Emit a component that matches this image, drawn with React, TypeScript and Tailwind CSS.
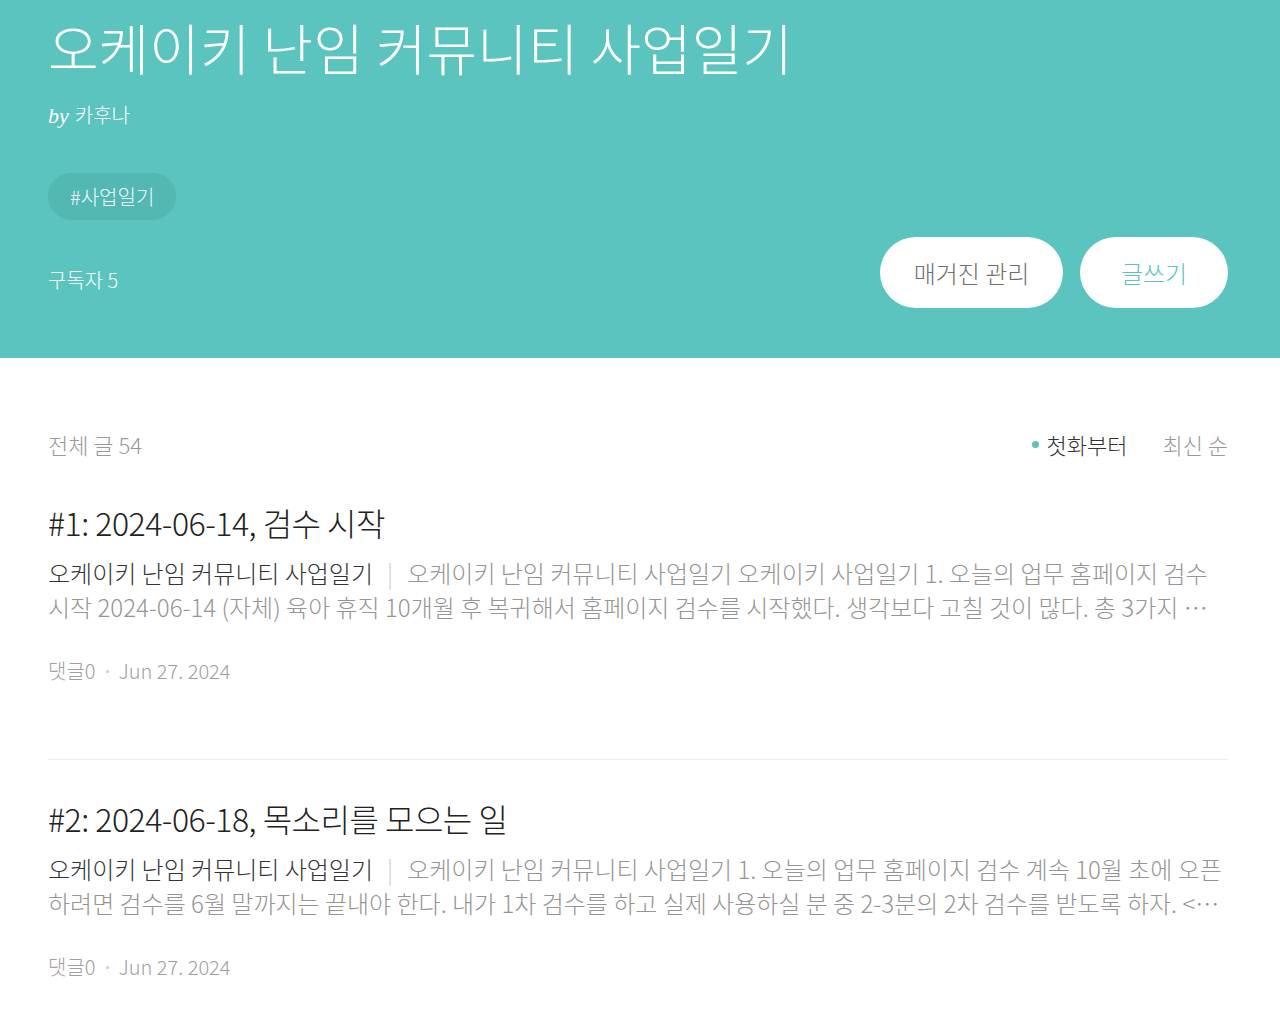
const posts = [
  {
    title: "#1: 2024-06-14, 검수 시작",
    body: "오케이키 난임 커뮤니티 사업일기 오케이키 사업일기 1. 오늘의 업무 홈페이지 검수 시작 2024-06-14 (자체) 육아 휴직 10개월 후 복귀해서 홈페이지 검수를 시작했다. 생각보다 고칠 것이 많다. 총 3가지 종류의 검수를 진행하기로 했다.",
  },
  {
    title: "#2: 2024-06-18, 목소리를 모으는 일",
    body: "오케이키 난임 커뮤니티 사업일기 1. 오늘의 업무 홈페이지 검수 계속 10월 초에 오픈 하려면 검수를 6월 말까지는 끝내야 한다. 내가 1차 검수를 하고 실제 사용하실 분 중 2-3분의 2차 검수를 받도록 하자. <홈페이지 검수 목록>",
  },
];

const font = { fontFamily: '"Noto Sans CJK KR", "Noto Sans", sans-serif' };

export default function App() {
  return (
    <div className="min-h-[1028px] bg-white" style={font}>
      <header className="bg-[#5bc4bf] pl-12 pr-[52px] pt-[15px] pb-[50px] text-white">
        <h1 className="text-[55px] leading-[62px] font-light">오케이키 난임 커뮤니티 사업일기</h1>
        <p className="mt-[24px] text-[20px] leading-7 font-light">
          <span className="italic text-[22px] mr-[6px]" style={{ fontFamily: '"Liberation Serif", serif' }}>by</span>
          카후나
        </p>
        <div className="mt-[43px]">
          <span className="inline-flex h-[47px] items-center rounded-full bg-[#53b7b2] px-[22px] text-[20px] font-light text-[#f2fbfa]">
            #사업일기
          </span>
        </div>
        <div className="mt-[17px] flex items-end justify-between">
          <span className="pb-[14px] text-[20px] leading-7 font-light">구독자 5</span>
          <div className="flex gap-[17px]">
            <button className="h-[71px] w-[183px] rounded-full bg-white text-[24px] font-light text-[#707070]">매거진 관리</button>
            <button className="h-[71px] w-[148px] rounded-full bg-white text-[24px] font-light text-[#5bc4bf]">글쓰기</button>
          </div>
        </div>
      </header>

      <main className="pl-12 pr-[52px] pt-[72px]">
        <div className="flex items-center justify-between text-[22px] leading-7 font-light">
          <span className="text-[#999]">전체 글 54</span>
          <div className="flex items-center">
            <span className="mr-[7px] h-[7px] w-[7px] rounded-full bg-[#5bc4bf]"></span>
            <span className="text-[#333]">첫화부터</span>
            <span className="ml-[35px] text-[#999]">최신 순</span>
          </div>
        </div>

        <ul className="mt-[6px]">
          {posts.map((p, i) => (
            <li key={i} className={"pt-[38px] pb-[76px] " + (i > 0 ? "border-t border-[#eee]" : "")}>
              <h2 className="text-[32px] leading-10 font-light tracking-[-0.5px] text-[#222]">{p.title}</h2>
              <p className="mt-[14px] line-clamp-2 text-[24px] leading-[34px] font-light text-[#959595]">
                <span className="text-[#333]">오케이키 난임 커뮤니티 사업일기</span>
                <span className="mx-[14px] text-[#ccc]">|</span>
                {p.body}
              </p>
              <div className="mt-[35px] flex items-center text-[20px] leading-6 font-light text-[#a0a0a0]">
                <span>댓글0</span>
                <span className="mx-[10px] h-[3px] w-[3px] rounded-full bg-[#ccc]"></span>
                <span>Jun 27. 2024</span>
              </div>
            </li>
          ))}
        </ul>
      </main>
    </div>
  );
}
